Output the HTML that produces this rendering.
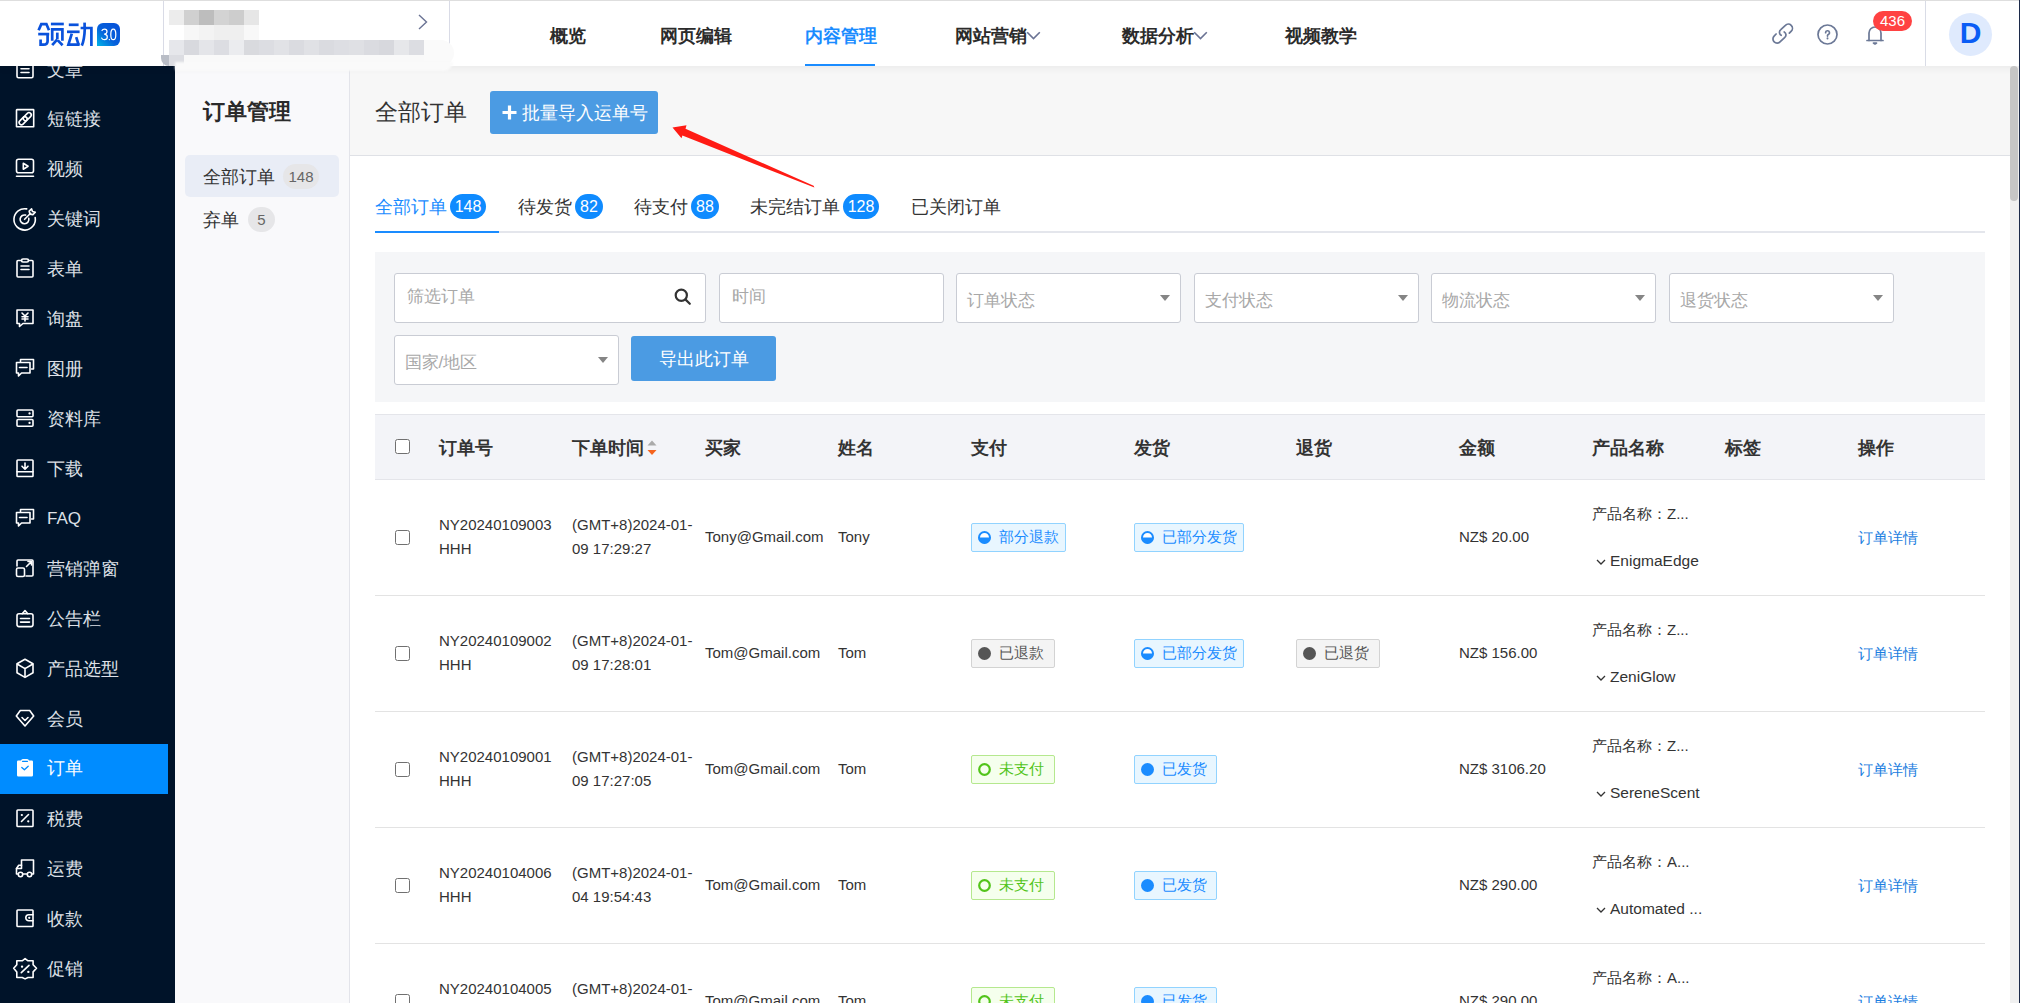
<!DOCTYPE html><html><head><meta charset="utf-8"><title>订单管理</title><style>
*{box-sizing:border-box;margin:0;padding:0}
html,body{width:2020px;height:1003px;overflow:hidden;background:#fff;font-family:"Liberation Sans", sans-serif;color:#333}
.a{position:absolute;white-space:nowrap}
svg{position:absolute;overflow:visible}
</style></head><body>
<div class="a" style="left:0;top:0;width:2020px;height:1003px;background:#fff"></div>
<div class="a" style="left:0;top:66px;width:175px;height:937px;background:#001329"></div>
<div class="a" style="left:175px;top:66px;width:175px;height:937px;background:#f9f9fb;border-right:1px solid #e3e4ea"></div>
<div class="a" style="left:350px;top:66px;width:1660px;height:90px;background:#f7f7f7;border-bottom:1px solid #dfe1e6"></div>
<svg style="left:15px;top:58px" width="20" height="20" viewBox="0 0 20 20" fill="none" stroke="#fff" stroke-width="1.6" stroke-linecap="round" stroke-linejoin="round"><rect x="2" y="1.5" width="16" height="18.3" rx="1.5"/><path d="M6 10.8h8M6 14.5h8"/></svg>
<div class="a" style="left:47px;top:56.5px;font-size:18px;line-height:26px;color:#dde0e6;font-weight:normal;">文章</div>
<svg style="left:15px;top:108px" width="20" height="20" viewBox="0 0 20 20" fill="none" stroke="#fff" stroke-width="1.6" stroke-linecap="round" stroke-linejoin="round"><rect x="1.5" y="1.6" width="17.2" height="17.2" rx="0.4"/><g transform="rotate(-45 10.2 10.7)"><rect x="2.6" y="8.4" width="9.4" height="4.6" rx="2.3"/><rect x="8.4" y="8.4" width="9.4" height="4.6" rx="2.3"/></g></svg>
<div class="a" style="left:47px;top:105.5px;font-size:18px;line-height:26px;color:#dde0e6;font-weight:normal;">短链接</div>
<svg style="left:15px;top:158px" width="20" height="20" viewBox="0 0 20 20" fill="none" stroke="#fff" stroke-width="1.6" stroke-linecap="round" stroke-linejoin="round"><rect x="1.5" y="1.2" width="17" height="13.5" rx="2"/><path d="M1.5 18.2h17"/><path d="M8.3 5.2l4.8 3-4.8 3z"/></svg>
<div class="a" style="left:47px;top:155.5px;font-size:18px;line-height:26px;color:#dde0e6;font-weight:normal;">视频</div>
<svg style="left:15px;top:208px" width="20" height="20" viewBox="0 0 20 20" fill="none" stroke="#fff" stroke-width="1.6" stroke-linecap="round" stroke-linejoin="round"><path d="M11.7 0.9A10.7 10.7 0 1 0 20.2 9.6"/><path d="M10.6 7.1A4.4 4.4 0 1 0 13.8 10.4"/><path d="M9.6 11.3L15.6 5.3"/><path d="M14.2 3.2l2.4-2.3.9 2.5 2.8.8-2.4 2.4-3-.5z"/></svg>
<div class="a" style="left:47px;top:205.5px;font-size:18px;line-height:26px;color:#dde0e6;font-weight:normal;">关键词</div>
<svg style="left:15px;top:258px" width="20" height="20" viewBox="0 0 20 20" fill="none" stroke="#fff" stroke-width="1.6" stroke-linecap="round" stroke-linejoin="round"><path d="M6.5 2.5H3a1 1 0 0 0-1 1V18a1 1 0 0 0 1 1h14a1 1 0 0 0 1-1V3.5a1 1 0 0 0-1-1h-3.5"/><rect x="6.5" y="1" width="7" height="3" rx="1.5"/><path d="M6 8h8M6 11.5h8"/></svg>
<div class="a" style="left:47px;top:255.5px;font-size:18px;line-height:26px;color:#dde0e6;font-weight:normal;">表单</div>
<svg style="left:15px;top:308px" width="20" height="20" viewBox="0 0 20 20" fill="none" stroke="#fff" stroke-width="1.6" stroke-linecap="round" stroke-linejoin="round"><path d="M2 2h16v13.5H8l-3.5 3v-3H2z"/><path d="M7 5l3 3 3-3M10 8v5M7 8.8h6M7 11h6"/></svg>
<div class="a" style="left:47px;top:305.5px;font-size:18px;line-height:26px;color:#dde0e6;font-weight:normal;">询盘</div>
<svg style="left:15px;top:358px" width="20" height="20" viewBox="0 0 20 20" fill="none" stroke="#fff" stroke-width="1.6" stroke-linecap="round" stroke-linejoin="round"><path d="M5.5 3.5V1.5h13v9.5h-2"/><path d="M1.5 4.5h13.5v10.5H6.5l-3 3v-3h-2z"/><path d="M4.5 9.5h7.5"/></svg>
<div class="a" style="left:47px;top:355.5px;font-size:18px;line-height:26px;color:#dde0e6;font-weight:normal;">图册</div>
<svg style="left:15px;top:408px" width="20" height="20" viewBox="0 0 20 20" fill="none" stroke="#fff" stroke-width="1.6" stroke-linecap="round" stroke-linejoin="round"><rect x="2" y="2" width="16" height="6.8" rx="1"/><rect x="2" y="11.5" width="16" height="6.8" rx="1"/><path d="M14.5 5.4h.1M14.5 14.9h.1" stroke-width="2.2"/></svg>
<div class="a" style="left:47px;top:405.5px;font-size:18px;line-height:26px;color:#dde0e6;font-weight:normal;">资料库</div>
<svg style="left:15px;top:458px" width="20" height="20" viewBox="0 0 20 20" fill="none" stroke="#fff" stroke-width="1.6" stroke-linecap="round" stroke-linejoin="round"><rect x="2" y="2" width="16" height="16.5" rx="0.8"/><path d="M2 13.8h16"/><path d="M10 5v6M7 8.2l3 3 3-3"/></svg>
<div class="a" style="left:47px;top:455.5px;font-size:18px;line-height:26px;color:#dde0e6;font-weight:normal;">下载</div>
<svg style="left:15px;top:508px" width="20" height="20" viewBox="0 0 20 20" fill="none" stroke="#fff" stroke-width="1.6" stroke-linecap="round" stroke-linejoin="round"><path d="M5.5 3.5V1.5h13v9.5h-2"/><path d="M1.5 4.5h13.5v10.5H6.5l-3 3v-3h-2z"/><path d="M4.5 9.5h7.5"/></svg>
<div class="a" style="left:47px;top:505.5px;font-size:17px;line-height:26px;color:#dde0e6;font-weight:normal;">FAQ</div>
<svg style="left:15px;top:558px" width="20" height="20" viewBox="0 0 20 20" fill="none" stroke="#fff" stroke-width="1.6" stroke-linecap="round" stroke-linejoin="round"><path d="M2 8V3a1 1 0 0 1 1-1h14a1 1 0 0 1 1 1v14a1 1 0 0 1-1 1h-6"/><rect x="1.5" y="10" width="8" height="8.5" rx="1.5"/><path d="M11.5 8.5l5-5M13 3.5h3.5V7"/></svg>
<div class="a" style="left:47px;top:555.5px;font-size:18px;line-height:26px;color:#dde0e6;font-weight:normal;">营销弹窗</div>
<svg style="left:15px;top:608px" width="20" height="20" viewBox="0 0 20 20" fill="none" stroke="#fff" stroke-width="1.6" stroke-linecap="round" stroke-linejoin="round"><path d="M7.2 5.7L10 2.6l2.8 3.1"/><rect x="2" y="5.7" width="16" height="12.9" rx="2"/><path d="M5.5 10.5h9M5.5 14.1h9"/></svg>
<div class="a" style="left:47px;top:605.5px;font-size:18px;line-height:26px;color:#dde0e6;font-weight:normal;">公告栏</div>
<svg style="left:15px;top:658px" width="20" height="20" viewBox="0 0 20 20" fill="none" stroke="#fff" stroke-width="1.6" stroke-linecap="round" stroke-linejoin="round"><path d="M10 1.2l8 4.6v9l-8 4.6-8-4.6v-9z"/><path d="M2.5 6.2L10 10.6l7.5-4.4M10 10.6V18.5"/></svg>
<div class="a" style="left:47px;top:655.5px;font-size:18px;line-height:26px;color:#dde0e6;font-weight:normal;">产品选型</div>
<svg style="left:15px;top:708px" width="20" height="20" viewBox="0 0 20 20" fill="none" stroke="#fff" stroke-width="1.6" stroke-linecap="round" stroke-linejoin="round"><path d="M5.3 2.5h9.4l4 5.5L10 18 1.3 8z"/><path d="M7 9.5l3 3 3-3"/></svg>
<div class="a" style="left:47px;top:705.5px;font-size:18px;line-height:26px;color:#dde0e6;font-weight:normal;">会员</div>
<div class="a" style="left:0;top:744px;width:168px;height:50px;background:#008cff"></div>
<svg style="left:15px;top:758px" width="20" height="20" viewBox="0 0 20 20"><path fill="#fff" d="M3.2 2.6h2.8a2 2 0 0 1 2-1.6h4a2 2 0 0 1 2 1.6h2.8a1.2 1.2 0 0 1 1.2 1.2v13.4a1.4 1.4 0 0 1-1.4 1.4H3.4a1.4 1.4 0 0 1-1.4-1.4V3.8a1.2 1.2 0 0 1 1.2-1.2z"/><path d="M7.5 3.3h5" stroke="#008cff" stroke-width="1.2" stroke-linecap="round"/><path d="M6.8 9.4l2.6 2.4 3.8-3.6" fill="none" stroke="#008cff" stroke-width="1.3" stroke-linecap="round" stroke-linejoin="round"/></svg>
<div class="a" style="left:47px;top:755.0px;font-size:18px;line-height:26px;color:#fff;font-weight:normal;">订单</div>
<svg style="left:15px;top:808px" width="20" height="20" viewBox="0 0 20 20" fill="none" stroke="#fff" stroke-width="1.6" stroke-linecap="round" stroke-linejoin="round"><rect x="2" y="2" width="16" height="16.5" rx="0.8"/><path d="M6.5 13.5l7-7"/><path d="M6.8 7h.1M13.2 13.3h.1" stroke-width="2.2"/></svg>
<div class="a" style="left:47px;top:805.5px;font-size:18px;line-height:26px;color:#dde0e6;font-weight:normal;">税费</div>
<svg style="left:15px;top:858px" width="20" height="20" viewBox="0 0 20 20" fill="none" stroke="#fff" stroke-width="1.6" stroke-linecap="round" stroke-linejoin="round"><path d="M6.5 2h12v14H1.5v-5.5l2.2-3.2h2.8z"/><path d="M1.5 10.5h5V7.3"/><circle cx="5.5" cy="16.5" r="2.2" fill="#001329"/><circle cx="14.5" cy="16.5" r="2.2" fill="#001329"/></svg>
<div class="a" style="left:47px;top:855.5px;font-size:18px;line-height:26px;color:#dde0e6;font-weight:normal;">运费</div>
<svg style="left:15px;top:908px" width="20" height="20" viewBox="0 0 20 20" fill="none" stroke="#fff" stroke-width="1.6" stroke-linecap="round" stroke-linejoin="round"><rect x="2" y="2" width="16" height="16.5" rx="0.8"/><path d="M18 6.8h-4.2a3 3 0 0 0 0 6H18"/><path d="M14.2 9.8h.1" stroke-width="2.2"/></svg>
<div class="a" style="left:47px;top:905.5px;font-size:18px;line-height:26px;color:#dde0e6;font-weight:normal;">收款</div>
<svg style="left:15px;top:958px" width="20" height="20" viewBox="0 0 20 20" fill="none" stroke="#fff" stroke-width="1.6" stroke-linecap="round" stroke-linejoin="round"><path d="M10.1 0.6L13 2.8H18.1V6.7L21.5 10.3 18.1 13.9V19.5H13L10.1 20.9 7.2 19.5H1.8V13.9L-1.3 10.3 1.8 6.7V2.8H7.2z"/><path d="M6.3 14.6L14 7.4"/><path d="M7 8.7h.1M13.3 13.9h.1" stroke-width="2.3"/></svg>
<div class="a" style="left:47px;top:955.5px;font-size:18px;line-height:26px;color:#dde0e6;font-weight:normal;">促销</div>
<div class="a" style="left:203px;top:96.5px;font-size:22.2px;line-height:30px;color:#2a2a2a;font-weight:bold;">订单管理</div>
<div class="a" style="left:185px;top:155px;width:154px;height:42px;background:#e9edf6;border-radius:5px"></div>
<div class="a" style="left:203px;top:163.5px;font-size:18px;line-height:26px;color:#333;font-weight:normal;">全部订单</div>
<div class="a" style="left:283px;top:164px;width:36px;height:25px;border-radius:13px;background:#e6e6e8;color:#666;font-size:15px;line-height:25px;text-align:center">148</div>
<div class="a" style="left:203px;top:206.5px;font-size:18px;line-height:26px;color:#333;font-weight:normal;">弃单</div>
<div class="a" style="left:248px;top:207px;width:27px;height:25px;border-radius:13px;background:#e6e6e8;color:#666;font-size:15px;line-height:25px;text-align:center">5</div>
<div class="a" style="left:375px;top:96.0px;font-size:23px;line-height:32px;color:#333;font-weight:normal;">全部订单</div>
<div class="a" style="left:490px;top:91px;width:168px;height:43px;background:#4b9be3;border-radius:3px"></div>
<svg style="left:502px;top:105px" width="15" height="15" viewBox="0 0 15 15"><path d="M7.5 0.5v14M0.5 7.5h14" stroke="#fff" stroke-width="3.2"/></svg>
<div class="a" style="left:522px;top:100.0px;font-size:17.5px;line-height:26px;color:#fff;font-weight:normal;">批量导入运单号</div>
<svg style="left:0;top:0" width="2020" height="1003"><polygon fill="#ff1b14" points="672.5,127.5 686.5,125.2 685.5,128.7 813.6,185.7 814.4,187.6 682.4,135.4 681.5,138.2"/></svg>
<div class="a" style="left:375px;top:193.5px;font-size:18px;line-height:26px;color:#1a8cff;font-weight:normal;">全部订单</div>
<div class="a" style="left:450px;top:194.0px;width:36px;height:25px;border-radius:13px;background:#0f8bff;color:#fff;font-size:16px;line-height:25px;text-align:center">148</div>
<div class="a" style="left:518px;top:193.5px;font-size:18px;line-height:26px;color:#333;font-weight:normal;">待发货</div>
<div class="a" style="left:575px;top:194.0px;width:28px;height:25px;border-radius:13px;background:#0f8bff;color:#fff;font-size:16px;line-height:25px;text-align:center">82</div>
<div class="a" style="left:634px;top:193.5px;font-size:18px;line-height:26px;color:#333;font-weight:normal;">待支付</div>
<div class="a" style="left:691px;top:194.0px;width:28px;height:25px;border-radius:13px;background:#0f8bff;color:#fff;font-size:16px;line-height:25px;text-align:center">88</div>
<div class="a" style="left:750px;top:193.5px;font-size:18px;line-height:26px;color:#333;font-weight:normal;">未完结订单</div>
<div class="a" style="left:843px;top:194.0px;width:36px;height:25px;border-radius:13px;background:#0f8bff;color:#fff;font-size:16px;line-height:25px;text-align:center">128</div>
<div class="a" style="left:911px;top:193.5px;font-size:18px;line-height:26px;color:#333;font-weight:normal;">已关闭订单</div>
<div class="a" style="left:375px;top:231px;width:1610px;height:2px;background:#e4e6ec"></div>
<div class="a" style="left:375px;top:231px;width:124px;height:2px;background:#1a8cff"></div>
<div class="a" style="left:375px;top:252px;width:1610px;height:150px;background:#f5f6f8"></div>
<div class="a" style="left:394px;top:273px;width:312px;height:50px;background:#fff;border:1px solid #c9ccd4;border-radius:3px"></div>
<div class="a" style="left:406.5px;top:285.0px;font-size:17px;line-height:24px;color:#a8a8a8;font-weight:normal;">筛选订单</div>
<svg style="left:674px;top:288px" width="18" height="18" viewBox="0 0 18 18" fill="none" stroke="#333" stroke-width="2.2" stroke-linecap="round"><circle cx="7.3" cy="7.3" r="5.6"/><path d="M11.6 11.6l4.2 4.2"/></svg>
<div class="a" style="left:719px;top:273px;width:225px;height:50px;background:#fff;border:1px solid #c9ccd4;border-radius:3px"></div>
<div class="a" style="left:731.5px;top:285.0px;font-size:17px;line-height:24px;color:#a8a8a8;font-weight:normal;">时间</div>
<div class="a" style="left:956px;top:273px;width:225px;height:50px;background:#fff;border:1px solid #c9ccd4;border-radius:3px"></div>
<div class="a" style="left:966.5px;top:289.0px;font-size:17px;line-height:24px;color:#a8a8a8;font-weight:normal;">订单状态</div>
<svg style="left:1160px;top:294.5px" width="10" height="7" viewBox="0 0 10 7"><path d="M0 0h10L5 6z" fill="#858585"/></svg>
<div class="a" style="left:1194px;top:273px;width:225px;height:50px;background:#fff;border:1px solid #c9ccd4;border-radius:3px"></div>
<div class="a" style="left:1204.5px;top:289.0px;font-size:17px;line-height:24px;color:#a8a8a8;font-weight:normal;">支付状态</div>
<svg style="left:1398px;top:294.5px" width="10" height="7" viewBox="0 0 10 7"><path d="M0 0h10L5 6z" fill="#858585"/></svg>
<div class="a" style="left:1431px;top:273px;width:225px;height:50px;background:#fff;border:1px solid #c9ccd4;border-radius:3px"></div>
<div class="a" style="left:1441.5px;top:289.0px;font-size:17px;line-height:24px;color:#a8a8a8;font-weight:normal;">物流状态</div>
<svg style="left:1635px;top:294.5px" width="10" height="7" viewBox="0 0 10 7"><path d="M0 0h10L5 6z" fill="#858585"/></svg>
<div class="a" style="left:1669px;top:273px;width:225px;height:50px;background:#fff;border:1px solid #c9ccd4;border-radius:3px"></div>
<div class="a" style="left:1679.5px;top:289.0px;font-size:17px;line-height:24px;color:#a8a8a8;font-weight:normal;">退货状态</div>
<svg style="left:1873px;top:294.5px" width="10" height="7" viewBox="0 0 10 7"><path d="M0 0h10L5 6z" fill="#858585"/></svg>
<div class="a" style="left:394px;top:335px;width:225px;height:50px;background:#fff;border:1px solid #c9ccd4;border-radius:3px"></div>
<div class="a" style="left:404.5px;top:351.0px;font-size:17px;line-height:24px;color:#a8a8a8;font-weight:normal;">国家/地区</div>
<svg style="left:598px;top:356.5px" width="10" height="7" viewBox="0 0 10 7"><path d="M0 0h10L5 6z" fill="#858585"/></svg>
<div class="a" style="left:631px;top:336px;width:145px;height:45px;background:#4b9be3;border-radius:3px"></div>
<div class="a" style="left:631px;top:345.5px;font-size:17.5px;line-height:26px;color:#fff;font-weight:normal;width:145px;text-align:center">导出此订单</div>
<div class="a" style="left:375px;top:414px;width:1610px;height:66px;background:#f3f4f8;border-top:1px solid #e4e5ea;border-bottom:1px solid #e4e5ea"></div>
<div class="a" style="left:395px;top:439.0px;width:15px;height:15px;border:1px solid #707070;border-radius:2.5px;background:#fff"></div>
<div class="a" style="left:439px;top:435.0px;font-size:18px;line-height:26px;color:#333;font-weight:bold;">订单号</div>
<div class="a" style="left:572px;top:435.0px;font-size:18px;line-height:26px;color:#333;font-weight:bold;">下单时间</div>
<div class="a" style="left:705px;top:435.0px;font-size:18px;line-height:26px;color:#333;font-weight:bold;">买家</div>
<div class="a" style="left:838px;top:435.0px;font-size:18px;line-height:26px;color:#333;font-weight:bold;">姓名</div>
<div class="a" style="left:971px;top:435.0px;font-size:18px;line-height:26px;color:#333;font-weight:bold;">支付</div>
<div class="a" style="left:1134px;top:435.0px;font-size:18px;line-height:26px;color:#333;font-weight:bold;">发货</div>
<div class="a" style="left:1296px;top:435.0px;font-size:18px;line-height:26px;color:#333;font-weight:bold;">退货</div>
<div class="a" style="left:1459px;top:435.0px;font-size:18px;line-height:26px;color:#333;font-weight:bold;">金额</div>
<div class="a" style="left:1592px;top:435.0px;font-size:18px;line-height:26px;color:#333;font-weight:bold;">产品名称</div>
<div class="a" style="left:1725px;top:435.0px;font-size:18px;line-height:26px;color:#333;font-weight:bold;">标签</div>
<div class="a" style="left:1858px;top:435.0px;font-size:18px;line-height:26px;color:#333;font-weight:bold;">操作</div>
<svg style="left:647px;top:439.5px" width="10" height="16" viewBox="0 0 10 16"><path d="M5 .5L9.5 5.5h-9z" fill="#aaa"/><path d="M.5 10h9L5 15z" fill="#f5641e"/></svg>
<div class="a" style="left:375px;top:595px;width:1610px;height:1px;background:#e3e3e3"></div>
<div class="a" style="left:395px;top:530.0px;width:15px;height:15px;border:1px solid #707070;border-radius:2.5px;background:#fff"></div>
<div class="a" style="left:439px;top:513.0px;font-size:15px;line-height:23px;color:#333;font-weight:normal;">NY20240109003</div>
<div class="a" style="left:439px;top:537.0px;font-size:15px;line-height:23px;color:#333;font-weight:normal;">HHH</div>
<div class="a" style="left:572px;top:513.0px;font-size:15px;line-height:23px;color:#333;font-weight:normal;">(GMT+8)2024-01-</div>
<div class="a" style="left:572px;top:537.0px;font-size:15px;line-height:23px;color:#333;font-weight:normal;">09 17:29:27</div>
<div class="a" style="left:705px;top:524.5px;font-size:15px;line-height:23px;color:#333;font-weight:normal;">Tony@Gmail.com</div>
<div class="a" style="left:838px;top:524.5px;font-size:15px;line-height:23px;color:#333;font-weight:normal;">Tony</div>
<div class="a" style="left:971px;top:523.0px;width:95px;height:29px;background:#e8f6ff;border:1px solid #91d3ff;border-radius:2px"></div>
<svg style="left:978.4px;top:530.9px" width="13" height="13" viewBox="0 0 13 13"><circle cx="6.5" cy="6.5" r="5.5" fill="#fff" stroke="#1b8cff" stroke-width="2"/><path d="M0.5 6.5a6 6 0 0 0 12 0z" fill="#1b8cff"/></svg>
<div class="a" style="left:999px;top:526.0px;font-size:15px;line-height:22px;color:#1b8cff;font-weight:normal;">部分退款</div>
<div class="a" style="left:1134px;top:523.0px;width:110px;height:29px;background:#e8f6ff;border:1px solid #91d3ff;border-radius:2px"></div>
<svg style="left:1141.4px;top:530.9px" width="13" height="13" viewBox="0 0 13 13"><circle cx="6.5" cy="6.5" r="5.5" fill="#fff" stroke="#1b8cff" stroke-width="2"/><path d="M0.5 6.5a6 6 0 0 0 12 0z" fill="#1b8cff"/></svg>
<div class="a" style="left:1162px;top:526.0px;font-size:15px;line-height:22px;color:#1b8cff;font-weight:normal;">已部分发货</div>
<div class="a" style="left:1459px;top:524.5px;font-size:15px;line-height:23px;color:#333;font-weight:normal;">NZ$ 20.00</div>
<div class="a" style="left:1592px;top:502.5px;font-size:15px;line-height:22px;color:#333;font-weight:normal;">产品名称：Z...</div>
<svg style="left:1596px;top:559.0px" width="10" height="6" viewBox="0 0 10 6"><path d="M1 1l4 4 4-4" fill="none" stroke="#333" stroke-width="1.3"/></svg>
<div class="a" style="left:1610px;top:550.0px;font-size:15.5px;line-height:22px;color:#333;font-weight:normal;">EnigmaEdge</div>
<div class="a" style="left:1858px;top:527.0px;font-size:15px;line-height:22px;color:#1a7de0;font-weight:normal;">订单详情</div>
<div class="a" style="left:375px;top:711px;width:1610px;height:1px;background:#e3e3e3"></div>
<div class="a" style="left:395px;top:646.0px;width:15px;height:15px;border:1px solid #707070;border-radius:2.5px;background:#fff"></div>
<div class="a" style="left:439px;top:629.0px;font-size:15px;line-height:23px;color:#333;font-weight:normal;">NY20240109002</div>
<div class="a" style="left:439px;top:653.0px;font-size:15px;line-height:23px;color:#333;font-weight:normal;">HHH</div>
<div class="a" style="left:572px;top:629.0px;font-size:15px;line-height:23px;color:#333;font-weight:normal;">(GMT+8)2024-01-</div>
<div class="a" style="left:572px;top:653.0px;font-size:15px;line-height:23px;color:#333;font-weight:normal;">09 17:28:01</div>
<div class="a" style="left:705px;top:640.5px;font-size:15px;line-height:23px;color:#333;font-weight:normal;">Tom@Gmail.com</div>
<div class="a" style="left:838px;top:640.5px;font-size:15px;line-height:23px;color:#333;font-weight:normal;">Tom</div>
<div class="a" style="left:971px;top:639.0px;width:84px;height:29px;background:#f4f4f4;border:1px solid #d3d3d3;border-radius:2px"></div>
<svg style="left:978.4px;top:646.9px" width="13" height="13" viewBox="0 0 13 13"><circle cx="6.5" cy="6.5" r="6.5" fill="#555"/></svg>
<div class="a" style="left:999px;top:642.0px;font-size:15px;line-height:22px;color:#555;font-weight:normal;">已退款</div>
<div class="a" style="left:1134px;top:639.0px;width:110px;height:29px;background:#e8f6ff;border:1px solid #91d3ff;border-radius:2px"></div>
<svg style="left:1141.4px;top:646.9px" width="13" height="13" viewBox="0 0 13 13"><circle cx="6.5" cy="6.5" r="5.5" fill="#fff" stroke="#1b8cff" stroke-width="2"/><path d="M0.5 6.5a6 6 0 0 0 12 0z" fill="#1b8cff"/></svg>
<div class="a" style="left:1162px;top:642.0px;font-size:15px;line-height:22px;color:#1b8cff;font-weight:normal;">已部分发货</div>
<div class="a" style="left:1296px;top:639.0px;width:84px;height:29px;background:#f4f4f4;border:1px solid #d3d3d3;border-radius:2px"></div>
<svg style="left:1303.4px;top:646.9px" width="13" height="13" viewBox="0 0 13 13"><circle cx="6.5" cy="6.5" r="6.5" fill="#555"/></svg>
<div class="a" style="left:1324px;top:642.0px;font-size:15px;line-height:22px;color:#555;font-weight:normal;">已退货</div>
<div class="a" style="left:1459px;top:640.5px;font-size:15px;line-height:23px;color:#333;font-weight:normal;">NZ$ 156.00</div>
<div class="a" style="left:1592px;top:618.5px;font-size:15px;line-height:22px;color:#333;font-weight:normal;">产品名称：Z...</div>
<svg style="left:1596px;top:675.0px" width="10" height="6" viewBox="0 0 10 6"><path d="M1 1l4 4 4-4" fill="none" stroke="#333" stroke-width="1.3"/></svg>
<div class="a" style="left:1610px;top:666.0px;font-size:15.5px;line-height:22px;color:#333;font-weight:normal;">ZeniGlow</div>
<div class="a" style="left:1858px;top:643.0px;font-size:15px;line-height:22px;color:#1a7de0;font-weight:normal;">订单详情</div>
<div class="a" style="left:375px;top:827px;width:1610px;height:1px;background:#e3e3e3"></div>
<div class="a" style="left:395px;top:762.0px;width:15px;height:15px;border:1px solid #707070;border-radius:2.5px;background:#fff"></div>
<div class="a" style="left:439px;top:745.0px;font-size:15px;line-height:23px;color:#333;font-weight:normal;">NY20240109001</div>
<div class="a" style="left:439px;top:769.0px;font-size:15px;line-height:23px;color:#333;font-weight:normal;">HHH</div>
<div class="a" style="left:572px;top:745.0px;font-size:15px;line-height:23px;color:#333;font-weight:normal;">(GMT+8)2024-01-</div>
<div class="a" style="left:572px;top:769.0px;font-size:15px;line-height:23px;color:#333;font-weight:normal;">09 17:27:05</div>
<div class="a" style="left:705px;top:756.5px;font-size:15px;line-height:23px;color:#333;font-weight:normal;">Tom@Gmail.com</div>
<div class="a" style="left:838px;top:756.5px;font-size:15px;line-height:23px;color:#333;font-weight:normal;">Tom</div>
<div class="a" style="left:971px;top:755.0px;width:84px;height:29px;background:#f5ffed;border:1px solid #b5e88e;border-radius:2px"></div>
<svg style="left:978.4px;top:762.9px" width="13" height="13" viewBox="0 0 13 13"><circle cx="6.5" cy="6.5" r="5.3" fill="none" stroke="#52c41a" stroke-width="2.2"/></svg>
<div class="a" style="left:999px;top:758.0px;font-size:15px;line-height:22px;color:#52c41a;font-weight:normal;">未支付</div>
<div class="a" style="left:1134px;top:755.0px;width:83px;height:29px;background:#e8f6ff;border:1px solid #91d3ff;border-radius:2px"></div>
<svg style="left:1141.4px;top:762.9px" width="13" height="13" viewBox="0 0 13 13"><circle cx="6.5" cy="6.5" r="6.5" fill="#1b8cff"/></svg>
<div class="a" style="left:1162px;top:758.0px;font-size:15px;line-height:22px;color:#1b8cff;font-weight:normal;">已发货</div>
<div class="a" style="left:1459px;top:756.5px;font-size:15px;line-height:23px;color:#333;font-weight:normal;">NZ$ 3106.20</div>
<div class="a" style="left:1592px;top:734.5px;font-size:15px;line-height:22px;color:#333;font-weight:normal;">产品名称：Z...</div>
<svg style="left:1596px;top:791.0px" width="10" height="6" viewBox="0 0 10 6"><path d="M1 1l4 4 4-4" fill="none" stroke="#333" stroke-width="1.3"/></svg>
<div class="a" style="left:1610px;top:782.0px;font-size:15.5px;line-height:22px;color:#333;font-weight:normal;">SereneScent</div>
<div class="a" style="left:1858px;top:759.0px;font-size:15px;line-height:22px;color:#1a7de0;font-weight:normal;">订单详情</div>
<div class="a" style="left:375px;top:943px;width:1610px;height:1px;background:#e3e3e3"></div>
<div class="a" style="left:395px;top:878.0px;width:15px;height:15px;border:1px solid #707070;border-radius:2.5px;background:#fff"></div>
<div class="a" style="left:439px;top:861.0px;font-size:15px;line-height:23px;color:#333;font-weight:normal;">NY20240104006</div>
<div class="a" style="left:439px;top:885.0px;font-size:15px;line-height:23px;color:#333;font-weight:normal;">HHH</div>
<div class="a" style="left:572px;top:861.0px;font-size:15px;line-height:23px;color:#333;font-weight:normal;">(GMT+8)2024-01-</div>
<div class="a" style="left:572px;top:885.0px;font-size:15px;line-height:23px;color:#333;font-weight:normal;">04 19:54:43</div>
<div class="a" style="left:705px;top:872.5px;font-size:15px;line-height:23px;color:#333;font-weight:normal;">Tom@Gmail.com</div>
<div class="a" style="left:838px;top:872.5px;font-size:15px;line-height:23px;color:#333;font-weight:normal;">Tom</div>
<div class="a" style="left:971px;top:871.0px;width:84px;height:29px;background:#f5ffed;border:1px solid #b5e88e;border-radius:2px"></div>
<svg style="left:978.4px;top:878.9px" width="13" height="13" viewBox="0 0 13 13"><circle cx="6.5" cy="6.5" r="5.3" fill="none" stroke="#52c41a" stroke-width="2.2"/></svg>
<div class="a" style="left:999px;top:874.0px;font-size:15px;line-height:22px;color:#52c41a;font-weight:normal;">未支付</div>
<div class="a" style="left:1134px;top:871.0px;width:83px;height:29px;background:#e8f6ff;border:1px solid #91d3ff;border-radius:2px"></div>
<svg style="left:1141.4px;top:878.9px" width="13" height="13" viewBox="0 0 13 13"><circle cx="6.5" cy="6.5" r="6.5" fill="#1b8cff"/></svg>
<div class="a" style="left:1162px;top:874.0px;font-size:15px;line-height:22px;color:#1b8cff;font-weight:normal;">已发货</div>
<div class="a" style="left:1459px;top:872.5px;font-size:15px;line-height:23px;color:#333;font-weight:normal;">NZ$ 290.00</div>
<div class="a" style="left:1592px;top:850.5px;font-size:15px;line-height:22px;color:#333;font-weight:normal;">产品名称：A...</div>
<svg style="left:1596px;top:907.0px" width="10" height="6" viewBox="0 0 10 6"><path d="M1 1l4 4 4-4" fill="none" stroke="#333" stroke-width="1.3"/></svg>
<div class="a" style="left:1610px;top:898.0px;font-size:15.5px;line-height:22px;color:#333;font-weight:normal;">Automated ...</div>
<div class="a" style="left:1858px;top:875.0px;font-size:15px;line-height:22px;color:#1a7de0;font-weight:normal;">订单详情</div>
<div class="a" style="left:395px;top:994.0px;width:15px;height:15px;border:1px solid #707070;border-radius:2.5px;background:#fff"></div>
<div class="a" style="left:439px;top:977.0px;font-size:15px;line-height:23px;color:#333;font-weight:normal;">NY20240104005</div>
<div class="a" style="left:439px;top:1001.0px;font-size:15px;line-height:23px;color:#333;font-weight:normal;">HHH</div>
<div class="a" style="left:572px;top:977.0px;font-size:15px;line-height:23px;color:#333;font-weight:normal;">(GMT+8)2024-01-</div>
<div class="a" style="left:572px;top:1001.0px;font-size:15px;line-height:23px;color:#333;font-weight:normal;">04 19:54:43</div>
<div class="a" style="left:705px;top:988.5px;font-size:15px;line-height:23px;color:#333;font-weight:normal;">Tom@Gmail.com</div>
<div class="a" style="left:838px;top:988.5px;font-size:15px;line-height:23px;color:#333;font-weight:normal;">Tom</div>
<div class="a" style="left:971px;top:987.0px;width:84px;height:29px;background:#f5ffed;border:1px solid #b5e88e;border-radius:2px"></div>
<svg style="left:978.4px;top:994.9px" width="13" height="13" viewBox="0 0 13 13"><circle cx="6.5" cy="6.5" r="5.3" fill="none" stroke="#52c41a" stroke-width="2.2"/></svg>
<div class="a" style="left:999px;top:990.0px;font-size:15px;line-height:22px;color:#52c41a;font-weight:normal;">未支付</div>
<div class="a" style="left:1134px;top:987.0px;width:83px;height:29px;background:#e8f6ff;border:1px solid #91d3ff;border-radius:2px"></div>
<svg style="left:1141.4px;top:994.9px" width="13" height="13" viewBox="0 0 13 13"><circle cx="6.5" cy="6.5" r="6.5" fill="#1b8cff"/></svg>
<div class="a" style="left:1162px;top:990.0px;font-size:15px;line-height:22px;color:#1b8cff;font-weight:normal;">已发货</div>
<div class="a" style="left:1459px;top:988.5px;font-size:15px;line-height:23px;color:#333;font-weight:normal;">NZ$ 290.00</div>
<div class="a" style="left:1592px;top:966.5px;font-size:15px;line-height:22px;color:#333;font-weight:normal;">产品名称：A...</div>
<svg style="left:1596px;top:1023.0px" width="10" height="6" viewBox="0 0 10 6"><path d="M1 1l4 4 4-4" fill="none" stroke="#333" stroke-width="1.3"/></svg>
<div class="a" style="left:1610px;top:1014.0px;font-size:15.5px;line-height:22px;color:#333;font-weight:normal;">Automated ...</div>
<div class="a" style="left:1858px;top:991.0px;font-size:15px;line-height:22px;color:#1a7de0;font-weight:normal;">订单详情</div>
<div class="a" style="left:0;top:0;width:2020px;height:66px;background:#fff;border-top:1px solid #dedede;box-shadow:0 2px 8px rgba(0,0,0,0.06)"></div>
<svg style="left:0;top:0" width="130" height="60" fill="none" stroke="#0a52dc" stroke-width="2.7" stroke-linecap="butt" stroke-linejoin="miter"><path d="M38.6 30.3L41.3 24.1H46.4L49 30.3"/><path d="M38.2 34.1H49.2"/><path d="M47.6 34.1V41Q47.6 44.7 43.5 44.7H40.6V39.4"/><path d="M50.9 24H63.8"/><path d="M52.2 40.8V29.3H62.4V40.8"/><path d="M57.3 32.6V39.2"/><path d="M57.3 39.4L52.2 45.2"/><path d="M57.8 40.4L62.6 45.2"/><path d="M68.8 24.8H78.6"/><path d="M67 31.8H79.6"/><path d="M71.8 33.6L68.4 44.6H79.6"/><path d="M76.2 37.2L78.6 44.8"/><path d="M84.6 22.6V28"/><path d="M80.6 28H91.4V45.9"/><path d="M84.8 28.5Q84.4 40 81.8 45.6"/></svg>
<div class="a" style="left:97px;top:22.5px;width:23px;height:23.5px;border-radius:6px 6px 6px 0;background:linear-gradient(45deg,#00b6e8 0%,#0660db 45%,#0650d8 100%)"></div>
<svg style="left:0;top:0" width="130" height="60" fill="none" stroke="#fff" stroke-width="1.25" stroke-linecap="round"><path d="M102 30.5Q102.6 29.1 104.5 29.1Q107 29.1 107 31.5Q107 34 104.2 34.2Q107.3 34.4 107.3 37Q107.3 39.7 104.5 39.7Q102.3 39.7 101.7 38.1"/><ellipse cx="113.3" cy="34.4" rx="2.5" ry="5.3"/><path d="M109.3 39.6h.2" stroke-width="1.3"/></svg>
<div class="a" style="left:163px;top:1px;width:1px;height:65px;background:#d9dbe6"></div>
<div class="a" style="left:449px;top:1px;width:1px;height:45px;background:#d9dbe6"></div>
<div class="a" style="left:169px;top:10px;width:15px;height:15px;background:#ececec"></div>
<div class="a" style="left:184px;top:10px;width:15px;height:15px;background:#d0d0d0"></div>
<div class="a" style="left:199px;top:10px;width:15px;height:15px;background:#bdbdbd"></div>
<div class="a" style="left:214px;top:10px;width:15px;height:15px;background:#d3d3d3"></div>
<div class="a" style="left:229px;top:10px;width:15px;height:15px;background:#cdcdcd"></div>
<div class="a" style="left:244px;top:10px;width:15px;height:15px;background:#e6e6e6"></div>
<div class="a" style="left:184px;top:25px;width:15px;height:15px;background:#f7f7f7"></div>
<div class="a" style="left:199px;top:25px;width:15px;height:15px;background:#f3f3f3"></div>
<div class="a" style="left:214px;top:25px;width:15px;height:15px;background:#efefef"></div>
<div class="a" style="left:229px;top:25px;width:15px;height:15px;background:#efefef"></div>
<div class="a" style="left:244px;top:25px;width:15px;height:15px;background:#f8f8f8"></div>
<div class="a" style="left:169px;top:40px;width:15px;height:15px;background:#e6e7eb"></div>
<div class="a" style="left:184px;top:40px;width:15px;height:15px;background:#d8d9de"></div>
<div class="a" style="left:199px;top:40px;width:15px;height:15px;background:#e4e5e9"></div>
<div class="a" style="left:214px;top:40px;width:15px;height:15px;background:#dcdde2"></div>
<div class="a" style="left:229px;top:40px;width:15px;height:15px;background:#ebecef"></div>
<div class="a" style="left:244px;top:40px;width:15px;height:15px;background:#d9dade"></div>
<div class="a" style="left:259px;top:40px;width:15px;height:15px;background:#dcdde2"></div>
<div class="a" style="left:274px;top:40px;width:15px;height:15px;background:#e1e2e6"></div>
<div class="a" style="left:289px;top:40px;width:15px;height:15px;background:#dadbe0"></div>
<div class="a" style="left:304px;top:40px;width:15px;height:15px;background:#e0e1e5"></div>
<div class="a" style="left:319px;top:40px;width:15px;height:15px;background:#dadbe0"></div>
<div class="a" style="left:334px;top:40px;width:15px;height:15px;background:#dddee3"></div>
<div class="a" style="left:349px;top:40px;width:15px;height:15px;background:#dfe0e4"></div>
<div class="a" style="left:364px;top:40px;width:15px;height:15px;background:#dadbe0"></div>
<div class="a" style="left:379px;top:40px;width:15px;height:15px;background:#d7d8dd"></div>
<div class="a" style="left:394px;top:40px;width:15px;height:15px;background:#e6e7ea"></div>
<div class="a" style="left:409px;top:40px;width:15px;height:15px;background:#dcdde2"></div>
<div class="a" style="left:424px;top:40px;width:30px;height:26px;background:#fafafa;border-radius:0 14px 14px 0"></div>
<div class="a" style="left:184px;top:55px;width:240px;height:11px;background:#f9f9f9"></div>
<div class="a" style="left:169px;top:55px;width:15px;height:11px;background:#dcdde2"></div>
<div class="a" style="left:161px;top:55px;width:8px;height:11px;background:#b9bdc6;border-radius:0 0 0 8px"></div>
<div class="a" style="left:175px;top:62px;width:278px;height:9px;background:#fafafa;border-radius:0 0 30px 12px;filter:blur(1.2px)"></div>
<svg style="left:418px;top:14px" width="10" height="16" viewBox="0 0 10 16"><path d="M1 1l7.5 7L1 15" fill="none" stroke="#6a7394" stroke-width="1.4"/></svg>
<div class="a" style="left:550px;top:22.7px;font-size:18px;line-height:26px;color:#2b2b2b;font-weight:bold;">概览</div>
<div class="a" style="left:660px;top:22.7px;font-size:18px;line-height:26px;color:#2b2b2b;font-weight:bold;">网页编辑</div>
<div class="a" style="left:805px;top:22.7px;font-size:18px;line-height:26px;color:#1a8cff;font-weight:bold;">内容管理</div>
<div class="a" style="left:955px;top:22.7px;font-size:18px;line-height:26px;color:#2b2b2b;font-weight:bold;">网站营销</div>
<svg style="left:1026px;top:30.5px" width="15" height="9" viewBox="0 0 15 9"><path d="M1.2 1.2l6.3 6.3 6.3-6.3" fill="none" stroke="#6b7394" stroke-width="1.6"/></svg>
<div class="a" style="left:1122px;top:22.7px;font-size:18px;line-height:26px;color:#2b2b2b;font-weight:bold;">数据分析</div>
<svg style="left:1193px;top:30.5px" width="15" height="9" viewBox="0 0 15 9"><path d="M1.2 1.2l6.3 6.3 6.3-6.3" fill="none" stroke="#6b7394" stroke-width="1.6"/></svg>
<div class="a" style="left:1285px;top:22.7px;font-size:18px;line-height:26px;color:#2b2b2b;font-weight:bold;">视频教学</div>
<div class="a" style="left:805px;top:63.5px;width:70px;height:2.5px;background:#1a8cff"></div>
<svg style="left:1773px;top:24px" width="20" height="20" viewBox="0 0 20 20" fill="none" stroke="#6b7896" stroke-width="1.7" stroke-linecap="round" stroke-linejoin="round"><path d="M8.2 11.3A3.4 3.4 0 0 1 7.8 5.6L12.4 1.4A4.1 4.1 0 0 1 18.3 7.1L16.3 9.2"/><path d="M11.2 7.9A3.4 3.4 0 0 1 11.6 13.6L7 17.8A4.1 4.1 0 0 1 1.1 12.1L3.1 10"/></svg>
<svg style="left:1817px;top:23.5px" width="21" height="21" viewBox="0 0 21 21" fill="none" stroke="#6b7896" stroke-width="1.7" stroke-linecap="round" stroke-linejoin="round"><circle cx="10.5" cy="10.5" r="9.5"/><path d="M8.6 8.7a1.95 1.95 0 1 1 2.7 1.8c-.5.2-.8.5-.8 1.1v.5"/><path d="M10.5 14.3v.2" stroke-width="1.9"/></svg>
<svg style="left:1866px;top:24px" width="18" height="21" viewBox="0 0 18 21" fill="none" stroke="#6b7896" stroke-width="1.7" stroke-linecap="round" stroke-linejoin="round"><path d="M3 16.5V9a6 6 0 0 1 12 0v7.5"/><path d="M1 16.5h16"/><path d="M7.5 19h3l-1.5 1z" fill="#6b7896"/></svg>
<div class="a" style="left:1873px;top:11px;width:39px;height:20px;border-radius:10px;background:#ff4242;color:#fff;font-size:15px;line-height:20px;text-align:center">436</div>
<div class="a" style="left:1925px;top:1px;width:1px;height:65px;background:#d9dce6"></div>
<div class="a" style="left:1949px;top:13px;width:43px;height:43px;border-radius:50%;background:#dfeafd;color:#0a5cf5;font-size:30px;font-weight:bold;line-height:40px;text-align:center">D</div>
<div class="a" style="left:2010px;top:66px;width:9px;height:937px;background:#f0f0f0"></div>
<div class="a" style="left:2010px;top:66px;width:8px;height:135px;background:#c6c6c6;border-radius:4px"></div>
<div class="a" style="left:2019px;top:0;width:1px;height:1003px;background:#1c2a4a"></div>
</body></html>
